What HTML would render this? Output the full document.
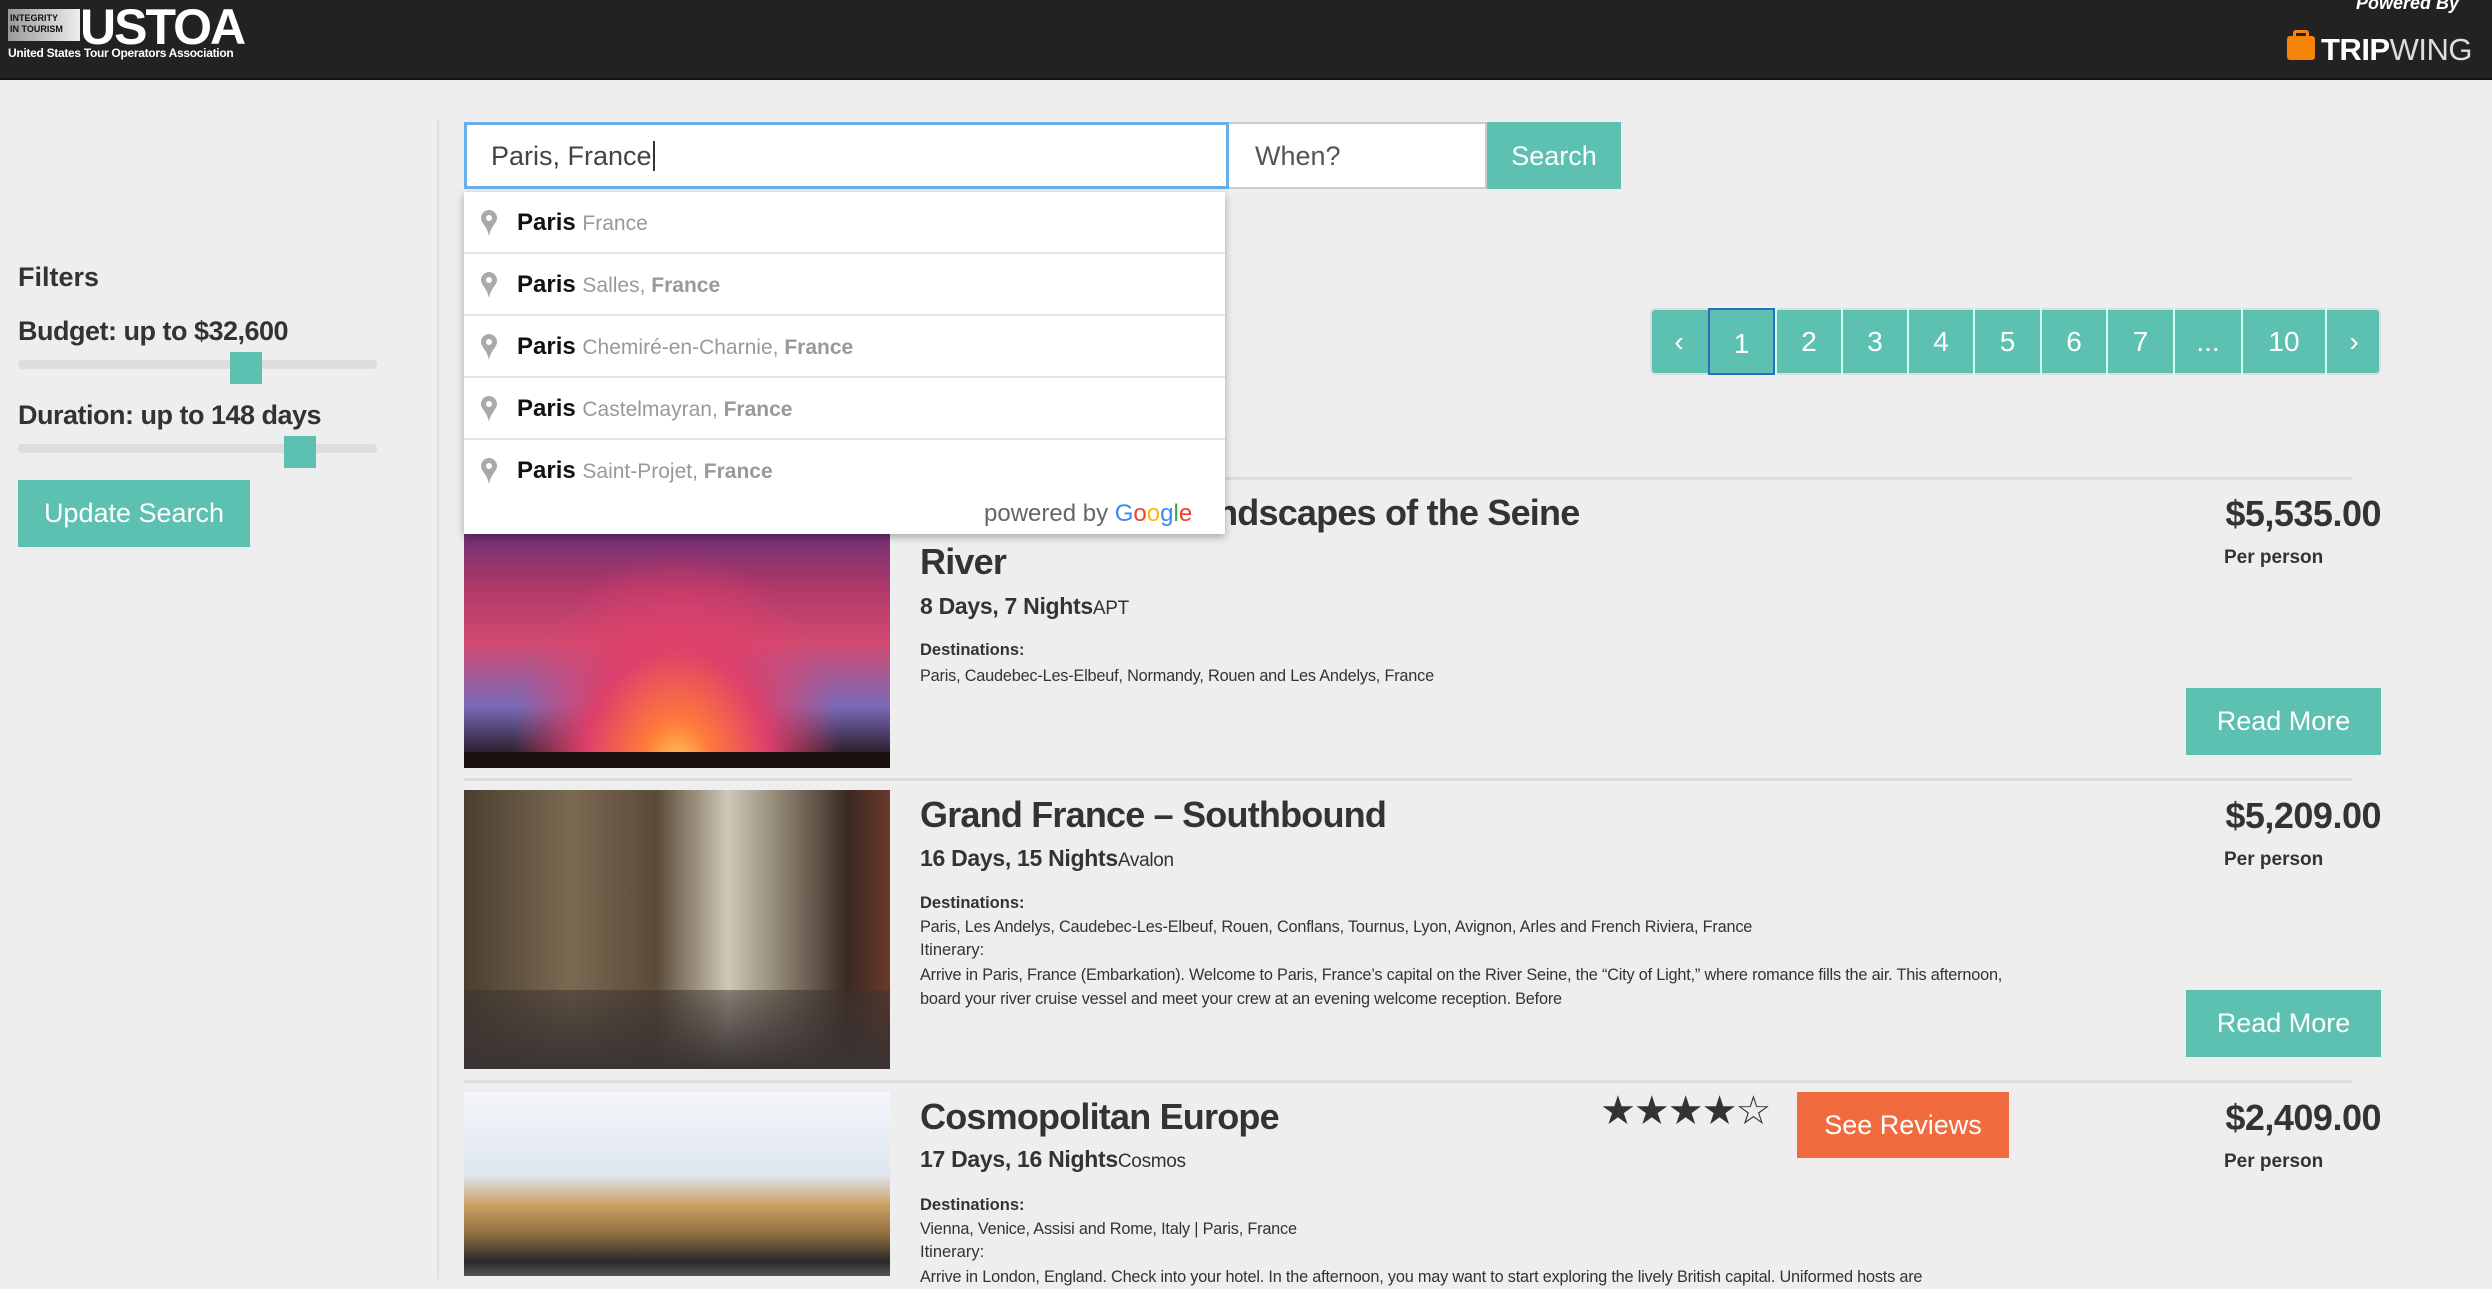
<!DOCTYPE html>
<html><head><meta charset="utf-8"><style>
*{box-sizing:border-box;margin:0;padding:0}
body{width:2492px;height:1276px;overflow:hidden;background:#eeeeee;font-family:"Liberation Sans",sans-serif;color:#333;position:relative}
.a{position:absolute}
.hdr{left:0;top:0;width:2492px;height:80px;background:#222;border-bottom:2px solid #111}
.teal{background:#5cc1b0;color:#fff}
.row{left:464px;width:761px;height:62px;border-bottom:2px solid #e4e4e4;background:#fff;font-size:24px;line-height:62px;padding-left:53px;color:#111;font-weight:bold}
.row span{font-weight:normal;color:#999;font-size:21px}
.row b{color:#999;font-size:21px}
.pin{left:16px;top:17px;width:18px;height:28px}
.pg{top:308px;height:67px;line-height:67px;text-align:center;font-size:28px;color:#fff;border-left:2px solid #cfe;}
.sep{left:464px;width:1888px;height:3px;background:#dcdcdc}
.title{left:920px;font-size:36px;font-weight:bold;color:#333;letter-spacing:-0.8px;white-space:nowrap}
.dur{left:920px;font-size:23px;font-weight:bold;letter-spacing:-0.3px}
.dur span{font-weight:normal;font-size:19px}
.lbl{left:920px;font-size:16.5px;font-weight:bold}
.txt{left:920px;font-size:16.3px;line-height:24px;letter-spacing:-0.2px}
.price{right:111px;font-size:36px;font-weight:bold;letter-spacing:-0.5px}
.pp{left:2224px;font-size:19px;font-weight:bold}
.btn{font-size:27px;text-align:center}
</style></head><body>
<div class="a hdr"></div>
<div class="a" style="left:8px;top:9px;width:72px;height:32px;background:linear-gradient(90deg,#999,#eee);font-size:9px;font-weight:bold;color:#111;line-height:11px;padding:4px 2px">INTEGRITY<br>IN TOURISM</div>
<div class="a" style="left:80px;top:-2px;font-size:50px;font-weight:bold;color:#fff;letter-spacing:-2px">USTOA</div>
<div class="a" style="left:8px;top:46px;font-size:12px;font-weight:bold;color:#fff;letter-spacing:-0.3px">United States Tour Operators Association</div>
<div class="a" style="left:2356px;top:-7px;font-size:18px;font-style:italic;font-weight:bold;color:#fff">Powered By</div>
<div class="a" style="left:2287px;top:36px;width:28px;height:24px;background:#f7840a;border-radius:3px"></div>
<div class="a" style="left:2293px;top:30px;width:16px;height:9px;border:3px solid #f7840a;border-bottom:none;border-radius:3px 3px 0 0"></div>
<div class="a" style="left:2321px;top:32px;font-size:31px;color:#fff;letter-spacing:-0.5px"><b>TRIP</b><span style="font-weight:normal;color:#ddd">WING</span></div>

<div class="a" style="left:437px;top:119px;width:2px;height:1160px;background:#ddd"></div>

<div class="a" style="left:18px;top:262px;font-size:27px;font-weight:bold">Filters</div>
<div class="a" style="left:18px;top:316px;font-size:27px;font-weight:bold;letter-spacing:-0.5px">Budget: up to $32,600</div>
<div class="a" style="left:18px;top:360px;width:359px;height:9px;background:#ddd;border-radius:4px"></div>
<div class="a teal" style="left:230px;top:352px;width:32px;height:32px"></div>
<div class="a" style="left:18px;top:400px;font-size:27px;font-weight:bold;letter-spacing:-0.5px">Duration: up to 148 days</div>
<div class="a" style="left:18px;top:444px;width:359px;height:9px;background:#ddd;border-radius:4px"></div>
<div class="a teal" style="left:284px;top:436px;width:32px;height:32px"></div>
<div class="a teal btn" style="left:18px;top:480px;width:232px;height:67px;line-height:67px">Update Search</div>

<div class="a" style="left:464px;top:122px;width:765px;height:67px;background:#fff;border:3px solid #6aaee8;font-size:27px;line-height:63px;padding-left:24px;color:#444">Paris, France<span style="border-left:2px solid #333;margin-left:1px"></span></div>
<div class="a" style="left:1229px;top:122px;width:258px;height:67px;background:#fff;border:2px solid #ccc;border-left:none;font-size:27px;line-height:65px;padding-left:26px;color:#555">When?</div>
<div class="a teal btn" style="left:1487px;top:122px;width:134px;height:67px;line-height:69px">Search</div>

<div class="a sep" style="top:477px"></div>
<div class="a sep" style="top:778px"></div>
<div class="a sep" style="top:1080px"></div>

<div class="a" style="left:1650px;top:308px;width:731px;height:67px;border-radius:5px;background:#5cc1b0;border:2px solid #ddd"></div>
<div class="a pg" style="left:1650px;width:58px;border:none">‹</div>
<div class="a pg" style="left:1708px;width:67px;border:2px solid #2a6ebd">1</div>
<div class="a pg" style="left:1775px;width:66px">2</div>
<div class="a pg" style="left:1841px;width:66px">3</div>
<div class="a pg" style="left:1907px;width:66px">4</div>
<div class="a pg" style="left:1973px;width:67px">5</div>
<div class="a pg" style="left:2040px;width:66px">6</div>
<div class="a pg" style="left:2106px;width:67px">7</div>
<div class="a pg" style="left:2173px;width:68px">...</div>
<div class="a pg" style="left:2241px;width:84px">10</div>
<div class="a pg" style="left:2325px;width:56px">›</div>

<!-- card 1 -->
<div class="a" style="left:464px;top:490px;width:426px;height:278px;background:radial-gradient(ellipse at 50% 100%,#ffcc55 0%,#ff7a3a 12%,#e0406a 30%,transparent 55%),linear-gradient(180deg,#3a2a7a 0%,#b0386a 35%,#d04a70 55%,#7a6ab8 78%,#201418 97%)"></div>
<div class="a" style="left:464px;top:752px;width:426px;height:16px;background:#1a1010"></div>
<div class="a title" style="left:856px;top:492px">Paris &amp; Normandy: Landscapes of the Seine</div>
<div class="a title" style="left:920px;top:541px">River</div>
<div class="a dur" style="top:593px">8 Days, 7 Nights<span>APT</span></div>
<div class="a lbl" style="top:641px">Destinations:</div>
<div class="a txt" style="top:664px">Paris, Caudebec-Les-Elbeuf, Normandy, Rouen and Les Andelys, France</div>
<div class="a price" style="top:493px">$5,535.00</div>
<div class="a pp" style="top:547px">Per person</div>
<div class="a teal btn" style="left:2186px;top:688px;width:195px;height:67px;line-height:67px">Read More</div>

<!-- card 2 -->
<div class="a" style="left:464px;top:790px;width:426px;height:279px;background:linear-gradient(90deg,#4a3e30 0%,#7a6a52 25%,#5a4a38 45%,#cfc8b8 62%,#8a8070 75%,#3a2a22 90%,#6a3a2a 100%)"></div>
<div class="a" style="left:464px;top:990px;width:426px;height:79px;background:linear-gradient(180deg,rgba(60,50,45,.5),#3a3434)"></div>
<div class="a title" style="top:794px">Grand France – Southbound</div>
<div class="a dur" style="top:845px">16 Days, 15 Nights<span>Avalon</span></div>
<div class="a lbl" style="top:894px">Destinations:</div>
<div class="a txt" style="top:915px">Paris, Les Andelys, Caudebec-Les-Elbeuf, Rouen, Conflans, Tournus, Lyon, Avignon, Arles and French Riviera, France</div>
<div class="a lbl" style="top:941px;font-weight:normal">Itinerary:</div>
<div class="a txt" style="top:963px;width:1100px">Arrive in Paris, France (Embarkation). Welcome to Paris, France’s capital on the River Seine, the “City of Light,” where romance fills the air. This afternoon, board your river cruise vessel and meet your crew at an evening welcome reception. Before</div>
<div class="a price" style="top:795px">$5,209.00</div>
<div class="a pp" style="top:849px">Per person</div>
<div class="a teal btn" style="left:2186px;top:990px;width:195px;height:67px;line-height:67px">Read More</div>

<!-- card 3 -->
<div class="a" style="left:464px;top:1092px;width:426px;height:184px;background:linear-gradient(180deg,#f4f6fa 0%,#dfe6f0 45%,#c9a060 62%,#8a6a40 78%,#2a2a2a 92%,#555 100%)"></div>
<div class="a title" style="top:1096px">Cosmopolitan Europe</div>
<div class="a" style="left:1600px;top:1088px;font-size:40px;color:#333;letter-spacing:-2px">★★★★☆</div>
<div class="a btn" style="left:1797px;top:1092px;width:212px;height:66px;line-height:66px;background:#f26b3f;color:#fff">See Reviews</div>
<div class="a dur" style="top:1146px">17 Days, 16 Nights<span>Cosmos</span></div>
<div class="a lbl" style="top:1196px">Destinations:</div>
<div class="a txt" style="top:1217px">Vienna, Venice, Assisi and Rome, Italy | Paris, France</div>
<div class="a lbl" style="top:1243px;font-weight:normal">Itinerary:</div>
<div class="a txt" style="top:1265px;width:1140px;white-space:nowrap">Arrive in London, England. Check into your hotel. In the afternoon, you may want to start exploring the lively British capital. Uniformed hosts are</div>
<div class="a price" style="top:1097px">$2,409.00</div>
<div class="a pp" style="top:1151px">Per person</div>

<!-- dropdown -->
<div class="a" style="left:464px;top:192px;width:761px;height:342px;background:#fff;box-shadow:0 3px 8px rgba(0,0,0,.3)"></div>
<div class="a row" style="top:192px">Paris <span>France</span><svg class="a pin" viewBox="0 0 18 28"><path d="M9 1a8 8 0 0 0-8 8c0 5 6 8 8 18 2-10 8-13 8-18a8 8 0 0 0-8-8z" fill="#aaa"/><circle cx="9" cy="9" r="3" fill="#fff"/></svg></div>
<div class="a row" style="top:254px">Paris <span>Salles, <b>France</b></span><svg class="a pin" viewBox="0 0 18 28"><path d="M9 1a8 8 0 0 0-8 8c0 5 6 8 8 18 2-10 8-13 8-18a8 8 0 0 0-8-8z" fill="#aaa"/><circle cx="9" cy="9" r="3" fill="#fff"/></svg></div>
<div class="a row" style="top:316px">Paris <span>Chemiré-en-Charnie, <b>France</b></span><svg class="a pin" viewBox="0 0 18 28"><path d="M9 1a8 8 0 0 0-8 8c0 5 6 8 8 18 2-10 8-13 8-18a8 8 0 0 0-8-8z" fill="#aaa"/><circle cx="9" cy="9" r="3" fill="#fff"/></svg></div>
<div class="a row" style="top:378px">Paris <span>Castelmayran, <b>France</b></span><svg class="a pin" viewBox="0 0 18 28"><path d="M9 1a8 8 0 0 0-8 8c0 5 6 8 8 18 2-10 8-13 8-18a8 8 0 0 0-8-8z" fill="#aaa"/><circle cx="9" cy="9" r="3" fill="#fff"/></svg></div>
<div class="a row" style="top:440px;border:none">Paris <span>Saint-Projet, <b>France</b></span><svg class="a pin" viewBox="0 0 18 28"><path d="M9 1a8 8 0 0 0-8 8c0 5 6 8 8 18 2-10 8-13 8-18a8 8 0 0 0-8-8z" fill="#aaa"/><circle cx="9" cy="9" r="3" fill="#fff"/></svg></div>
<div class="a" style="left:984px;top:500px;font-size:24px;color:#666;white-space:nowrap">powered by <span style="color:#4285f4">G</span><span style="color:#ea4335">o</span><span style="color:#fbbc05">o</span><span style="color:#4285f4">g</span><span style="color:#34a853">l</span><span style="color:#ea4335">e</span></div>
</body></html>
